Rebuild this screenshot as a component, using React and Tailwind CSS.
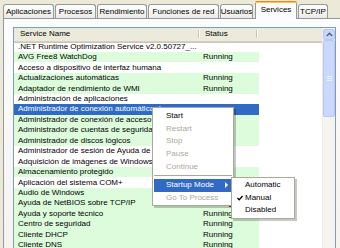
import React from 'react';

const tabs = [
  { label: 'Aplicaciones', w: 'w-[51px]', ml: 'ml-[3px]' },
  { label: 'Procesos', w: 'w-[41px]', ml: 'ml-[1px]' },
  { label: 'Rendimiento', w: 'w-[50px]', ml: 'ml-[1px]' },
  { label: 'Funciones de red', w: 'w-[71px]', ml: 'ml-[1px]' },
  { label: 'Usuarios', w: 'w-[33px]', ml: 'ml-[1px]' },
  { label: 'Services', w: 'w-[42px]', ml: 'ml-[2px]', active: true },
  { label: 'TCP/IP', w: 'w-[30px]', ml: 'ml-[1px]' },
];

// green = running
const services = [
  { name: '.NET Runtime Optimization Service v2.0.50727_...', status: '' },
  { name: 'AVG Free8 WatchDog', status: 'Running' },
  { name: 'Acceso a dispositivo de interfaz humana', status: '' },
  { name: 'Actualizaciones automáticas', status: 'Running' },
  { name: 'Adaptador de rendimiento de WMI', status: 'Running' },
  { name: 'Administración de aplicaciones', status: '' },
  { name: 'Administrador de conexión automática de acceso remoto', status: '', selected: true },
  { name: 'Administrador de conexión de acceso remoto', status: 'Running' },
  { name: 'Administrador de cuentas de seguridad', status: 'Running' },
  { name: 'Administrador de discos lógicos', status: 'Running' },
  { name: 'Administrador de sesión de Ayuda de escritorio remoto', status: '' },
  { name: 'Adquisición de imágenes de Windows (WIA)', status: '' },
  { name: 'Almacenamiento protegido', status: 'Running' },
  { name: 'Aplicación del sistema COM+', status: '' },
  { name: 'Audio de Windows', status: 'Running' },
  { name: 'Ayuda de NetBIOS sobre TCP/IP', status: 'Running' },
  { name: 'Ayuda y soporte técnico', status: 'Running' },
  { name: 'Centro de seguridad', status: 'Running' },
  { name: 'Cliente DHCP', status: 'Running' },
  { name: 'Cliente DNS', status: 'Running' },
];

const menuItems = [
  { label: 'Start' },
  { label: 'Restart', disabled: true },
  { label: 'Stop', disabled: true },
  { label: 'Pause', disabled: true },
  { label: 'Continue', disabled: true },
];

function Tab({ tab }) {
  if (tab.active) {
    return (
      <div className={`${tab.w} ${tab.ml} relative z-10 -mb-px h-[18px] flex flex-col rounded-t-[3px] border border-b-0 border-[#919b9c] bg-[#fcfcfe]`}>
        <div className="h-[2px] -mx-px -mt-px rounded-t-[3px] bg-[#e68b2c] border-b border-[#ffc73c]"></div>
        <div className="flex-1 flex items-center justify-center pb-[2px]">{tab.label}</div>
      </div>
    );
  }
  return (
    <div className={`${tab.w} ${tab.ml} h-[14px] flex items-center justify-center rounded-t-[3px] border border-b-0 border-[#919b9c] bg-gradient-to-b from-white to-[#ecebe5]`}>
      {tab.label}
    </div>
  );
}

function HeaderSep() {
  return <div className="w-[2px] h-[8px] border-l border-[#c7c5b2] bg-white"></div>;
}

function Scrollbar() {
  return (
    <div className="w-[13px] flex flex-col bg-[#f5f4ee] border-l border-[#eeede5]">
      <div className="h-[11px] mt-px flex items-center justify-center rounded-[2px] border border-[#b6c9f4] bg-[#c6d6fc]">
        <svg width="7" height="5" viewBox="0 0 7 5">
          <path d="M0.8 4 L3.5 1.3 L6.2 4" fill="none" stroke="#4d6185" strokeWidth="1.4" />
        </svg>
      </div>
      <div className="h-[77px] flex items-center justify-center rounded-[2px] border border-[#b6c9f4] bg-[#c9d8fc]">
        <div className="w-[5px] flex flex-col gap-px">
          <div className="h-px bg-[#eef2fd]"></div>
          <div className="h-px bg-[#eef2fd]"></div>
          <div className="h-px bg-[#eef2fd]"></div>
        </div>
      </div>
    </div>
  );
}

function ListView() {
  return (
    <div className="w-[323px] h-[240px] flex border border-[#7f9db9] bg-white overflow-hidden">
      <div className="flex-1 flex flex-col">
        <div className="h-[13.6px] flex items-center bg-[#ebeadb] border-b border-[#d6d2c2] shadow-[0_1px_0_#cbc7b8]">
          <div className="w-[184px] pl-[6px]">Service Name</div>
          <HeaderSep />
          <div className="w-[56px] pl-[5px]">Status</div>
          <HeaderSep />
        </div>
        {services.map((s) => (
          <div
            key={s.name}
            className={`w-[245px] h-[10.44px] flex items-center whitespace-nowrap ${
              s.selected ? 'bg-[#316ac5] text-white' : s.status ? 'bg-[#dcfcdc]' : ''
            }`}
          >
            <div className="w-[186px] pl-[4px] overflow-hidden">{s.name}</div>
            <div className="w-[59px] pl-[3px]">{s.status}</div>
          </div>
        ))}
      </div>
      <Scrollbar />
    </div>
  );
}

function ContextMenu() {
  return (
    <div className="absolute left-[152px] top-[107px] w-[82px] pt-[2px] pb-px bg-white border border-[#aca899] shadow-[2px_2px_0_rgba(0,0,0,0.22)]">
      {menuItems.map((m) => (
        <div key={m.label} className={`h-[12.6px] flex items-center pl-[13px] ${m.disabled ? 'text-[#aca899]' : 'text-black'}`}>
          {m.label}
        </div>
      ))}
      <div className="h-[6px] flex items-center px-[1px]">
        <div className="flex-1 h-px bg-[#aca899]"></div>
      </div>
      <div className="h-[12.6px] mx-px flex items-center justify-between pl-[12px] pr-[4px] bg-[#316ac5] text-white">
        <span>Startup Mode</span>
        <svg width="3" height="6" viewBox="0 0 3 6">
          <path d="M0 0 L3 3 L0 6 Z" fill="white" />
        </svg>
      </div>
      <div className="h-[12.6px] flex items-center pl-[13px] text-[#aca899]">Go To Process</div>
    </div>
  );
}

function SubMenu() {
  const items = ['Automatic', 'Manual', 'Disabled'];
  return (
    <div className="absolute left-[231px] top-[177px] w-[64px] pt-px pb-px bg-white border border-[#aca899] shadow-[2px_2px_0_rgba(0,0,0,0.22)]">
      {items.map((it) => (
        <div key={it} className="h-[12.5px] flex items-center">
          <div className="w-[13px] flex justify-end pr-[2px]">
            {it === 'Manual' && (
              <svg width="6" height="6" viewBox="0 0 6 6">
                <path d="M0.5 3 L2.2 4.8 L5.6 1" fill="none" stroke="black" strokeWidth="1.3" />
              </svg>
            )}
          </div>
          <span>{it}</span>
        </div>
      ))}
    </div>
  );
}

export default function App() {
  return (
    <div className="relative w-[340px] h-[248px] overflow-hidden bg-[#ece9d8] font-['Liberation_Sans',Arial,sans-serif] text-[8px] leading-none text-black">
      <div className="h-[18px] flex items-end">
        {tabs.map((t) => (
          <Tab key={t.label} tab={t} />
        ))}
      </div>
      <div className="ml-[3px] w-[350px] h-[240px] pt-[8px] pl-[9px] border border-[#919b9c] bg-gradient-to-b from-[#fcfcfe] to-[#f4f3ee]">
        <ListView />
      </div>
      <ContextMenu />
      <SubMenu />
    </div>
  );
}
